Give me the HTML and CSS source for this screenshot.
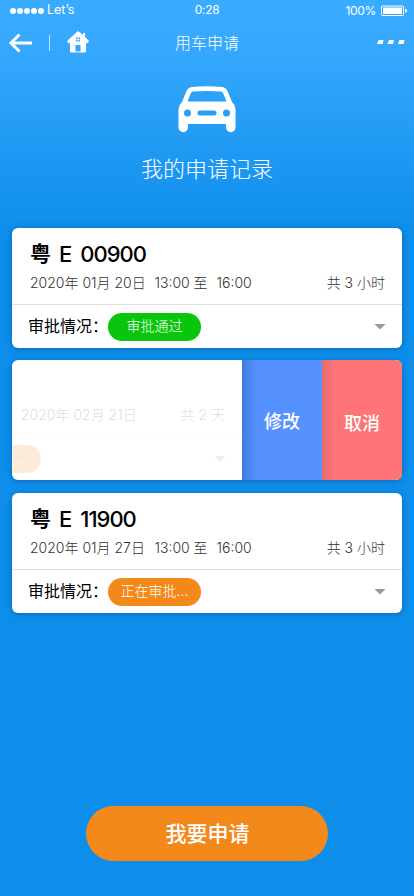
FILE: index.html
```html
<!DOCTYPE html>
<html lang="zh-CN">
<head>
<meta charset="utf-8">
<meta name="viewport" content="width=device-width, initial-scale=1">
<title>用车申请</title>
<link rel="stylesheet" href="styles.css">
</head>
<body>
<main class="screen">
  <div class="status">
    <div class="carrier"><span class="dots"><i></i><i></i><i></i><i></i><i></i></span><span class="name">Let’s</span></div>
    <div class="clock">0:28</div>
    <div class="power"><span>100%</span>
      <svg width="27" height="12" viewBox="0 0 27 12"><rect x=".5" y="1" width="22" height="9.5" rx="1" fill="none" stroke="#fff"/><rect x="2" y="2.5" width="19" height="6.5" fill="#fff"/><path d="M24 4h1l1 1v1.500l-1 1h-1z" fill="#fff"/></svg>
    </div>
  </div>
  <header class="nav">
    <div class="nav-left">
      <svg width="24" height="20" viewBox="0 0 24 20"><path d="M11.500 1.500 3 10l8.500 8.500M3 10h21" fill="none" stroke="#fff" stroke-width="3"/></svg>
      <span class="divider"></span>
      <svg class="home" width="24" height="24" viewBox="0 0 24 24"><path fill="#fff" fill-rule="evenodd" d="M12 1l5 4V3h2v4l4 4-1.500 2.500L20 12.500V21q0 1.500-1.500 1.500h-13Q4 22.500 4 21v-8.500L2.500 13.500 1 11zM10 7.500v4h4v-4zM9.500 15v6.500h5V15z"/><path d="M12 7v5M9.500 9.500h5" stroke="#fff" stroke-width=".7"/></svg>
    </div>
    <h1>用车申请</h1>
    <svg class="more" width="28" height="5" viewBox="0 0 28 5"><path d="M1.500 0H6.500L5.500 4H0zM12 0h5l-1 4h-5.500zM22.500 0h5l-1 4H21z" fill="#fff"/></svg>
  </header>
  <section class="hero">
    <svg width="58" height="47" viewBox="0 0 58 47"><path fill="#fff" fill-rule="evenodd" d="M14 1Q29-.5 44 1q4 .5 5.500 4L54 16q3 2.500 3.500 7v18.500a4.750 4.750 0 0 1-9.500 0V38H10v3.500a4.750 4.750 0 0 1-9.500 0V23Q1 18.500 4 16L8.500 5Q10 1.500 14 1zM15 5.500q-1.700.3-2.300 2L9.500 15.500h39L45.300 7.500Q44.700 5.800 43 5.500 29 4.500 15 5.500zM9.500 23.500a3.500 3.500 0 1 0 0 7 3.500 3.500 0 0 0 0-7zm39 0a3.500 3.500 0 1 0 0 7 3.500 3.500 0 0 0 0-7zM22 24.500a2.500 2.500 0 0 0 0 5h14a2.500 2.500 0 0 0 0-5z"/></svg>
    <h2>我的申请记录</h2>
  </section>
  <div class="list">
    <article class="card">
      <div class="info">
        <div class="plate"><b>粤</b><span>E</span><span class="number">00900</span></div>
        <div class="when"><span class="date">2020年 01月 20日</span><span class="start">13:00</span><span class="to">至</span><span>16:00</span><span class="total">共 3 小时</span></div>
      </div>
      <div class="state"><span class="label">审批情况：</span><span class="pill pass">审批通过</span><i class="caret"></i></div>
    </article>
    <article class="card swiped">
      <div class="under">
        <div class="info"><div class="when"><span class="date">2020年 02月 21日</span><span class="total">共 2 天</span></div></div>
        <div class="state"><span class="pill wait">正在审批...</span><i class="caret"></i></div>
      </div>
      <button class="edit">修改</button>
      <button class="cancel">取消</button>
    </article>
    <article class="card">
      <div class="info">
        <div class="plate"><b>粤</b><span>E</span><span class="number">11900</span></div>
        <div class="when"><span class="date">2020年 01月 27日</span><span class="start">13:00</span><span class="to">至</span><span>16:00</span><span class="total">共 3 小时</span></div>
      </div>
      <div class="state"><span class="label">审批情况：</span><span class="pill wait">正在审批...</span><i class="caret"></i></div>
    </article>
  </div>
  <button class="apply">我要申请</button>
</main>
</body>
</html>
```
FILE: styles.css
```css
* { box-sizing: border-box; }
body { margin: 0; font-family: Inter, "Noto Sans CJK SC", sans-serif; }
button { border: 0; padding: 0; color: #fff; font-family: inherit; }
h1, h2 { margin: 0; font-weight: 300; }
svg { display: block; }

.screen {
  width: 414px; height: 896px; overflow: hidden;
  display: flex; flex-direction: column;
  color: #fff;
  background: linear-gradient(#3aacff 0, #35a8fd 50px, #0e8eeb 230px, #0d8eea 100%);
}

.status { height: 22px; padding: 0 7px 0 10px; display: grid; grid-template-columns: 1fr auto 1fr; align-items: center; font-size: 12px; line-height: 20px; }
.carrier { display: flex; align-items: center; gap: 3px; }
.dots { display: flex; gap: 1px; }
.dots i { width: 6px; height: 6px; border-radius: 50%; background: #fff; }
.name { font-size: 12.500px; padding-bottom: 2px; }
.clock { letter-spacing: -.3px; padding: 0 3px 2px 0; }
.power { display: flex; justify-content: flex-end; align-items: center; gap: 5px; letter-spacing: -.3px; }
.power svg { margin-right: -1px; }

.nav { height: 42px; padding: 0 9px; display: grid; grid-template-columns: 1fr auto 1fr; align-items: center; }
.nav-left { display: flex; align-items: center; }
.nav-left svg:first-child { margin: 0 1px 0 -1px; }
.divider { width: 1px; height: 16px; background: #c5e5ff; margin: 0 16px; }
.nav-left .home { margin-top: -3px; }
.nav h1 { font-size: 16px; line-height: 24px; }
.more { justify-self: end; margin-top: -2px; }

.hero { height: 164px; padding-top: 22px; display: flex; flex-direction: column; align-items: center; }
.hero h2 { font-size: 22px; line-height: 32px; margin-top: 20px; }

.list { padding: 0 12px; display: flex; flex-direction: column; gap: 12px; }
.card { height: 120px; background: #fff; border-radius: 6px; color: #000; box-shadow: 0 1px 6px rgba(0, 50, 110, .4); overflow: hidden; }
.info { height: 77px; padding: 11px 17px 0 18px; border-bottom: 1px solid #e0e0e2; }
.plate { height: 30px; display: flex; align-items: center; gap: 8px; font-size: 22px; font-weight: 500; }
.plate b { font-size: 21px; line-height: 28px; font-weight: 700; }
.plate .number { letter-spacing: -1px; }
.when { height: 26px; display: flex; align-items: center; font-size: 14px; font-weight: 300; color: #333; white-space: pre; }
.date { width: 124.500px; }
.start { width: 39px; }
.to { width: 23px; }
.total { margin-left: auto; }
.state { height: 43px; padding: 0 16px; display: flex; align-items: center; }
.label { width: 80px; font-size: 16px; line-height: 24px; margin-bottom: 2px; white-space: nowrap; }
.pill { width: 93px; height: 28px; border-radius: 14px; color: #fff; font-size: 14px; font-weight: 300; line-height: 26px; text-align: center; }
.pass { background: #09c60c; }
.wait { background: #f3881b; }
.caret { margin-left: auto; width: 12px; height: 6px; background: #999; clip-path: polygon(0 0, 100% 0, 50% 100%); }

.swiped { display: flex; margin-bottom: 1px; }
.under { width: 230px; overflow: hidden; }
.under > * { opacity: .16; }
.under .info { padding: 41px 17px 0 9px; }
.under .state { padding: 0 16px 0 0; }
.under .pill { margin-left: -64px; flex-shrink: 0; }
.edit, .cancel { width: 80px; font-size: 18px; font-weight: 500; }
.edit { background: linear-gradient(90deg, #437bdb, #5591ff 14px); }
.cancel { background: linear-gradient(90deg, #e56b70, #ff7577 14px); padding-top: 4px; }

.apply { align-self: center; width: 242px; height: 55px; margin-top: 193px; padding: 0 0 3px 1px; border-radius: 28px; background: #f3881b; font-size: 21px; font-weight: 500; }
```
